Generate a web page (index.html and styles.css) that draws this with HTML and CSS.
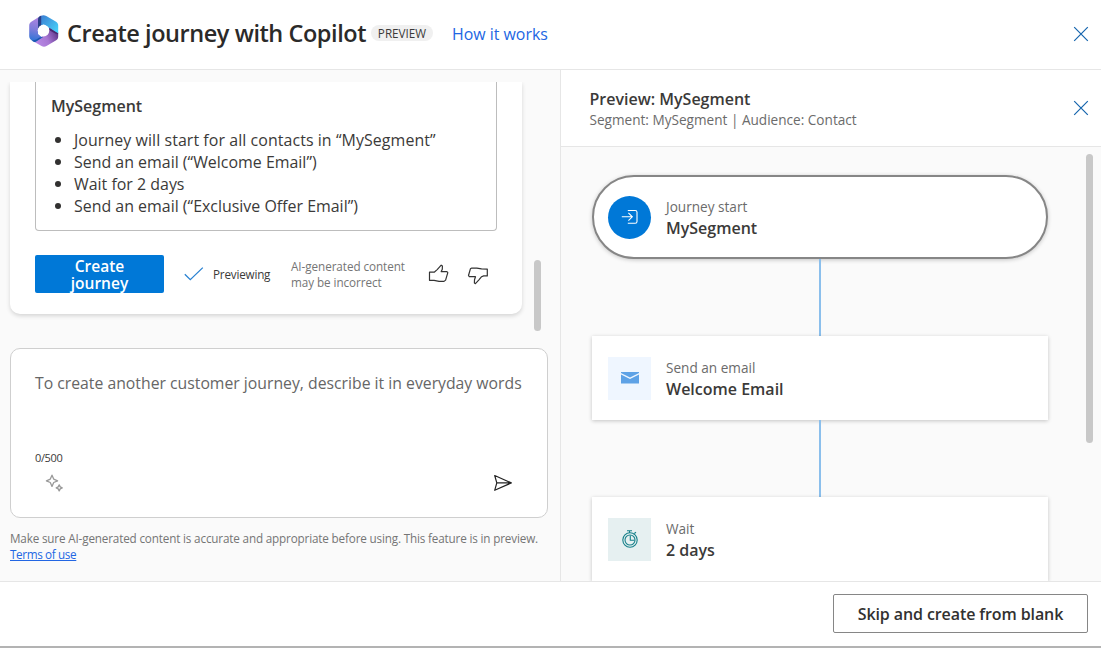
FILE: index.html
```html
<!DOCTYPE html>
<html lang="en">
<head>
<meta charset="utf-8">
<title>Create journey with Copilot</title>
<link rel="stylesheet" href="styles.css">
</head>
<body>
<div class="dialog">
  <header class="topbar">
    <svg class="logo" width="30" height="32" viewBox="0 0 30 32">
      <defs>
        <linearGradient id="lgA" x1=".2" y1="0" x2=".1" y2="1"><stop offset="0" stop-color="#b184e0"/><stop offset=".5" stop-color="#7c7cda"/><stop offset="1" stop-color="#2173d6"/></linearGradient>
        <linearGradient id="lgB" x1="0" y1="0" x2="1" y2=".8"><stop offset="0" stop-color="#3a76cf"/><stop offset="1" stop-color="#48d0f8"/></linearGradient>
        <linearGradient id="lgC" x1="0" y1=".7" x2="1" y2=".3"><stop offset="0" stop-color="#b98ae6"/><stop offset=".5" stop-color="#a877d4"/><stop offset="1" stop-color="#5c3487"/></linearGradient>
      </defs>
      <path fill="url(#lgC)" d="M29.200 17.500v3.900c0 1.900-.8 3.100-2.400 4.100l-9.300 5.600c-1.600 1-3.400 1-5 0l-7-4.200 8.500-6.200 6.500-7.700z"/>
      <path fill="url(#lgB)" d="M9.500 2.500C11 .6 14.500-.8 17.300.9l9.400 5.500c1.600 1 2.500 2.300 2.500 4.100v8L20 13l-5-3.500-4 1z"/>
      <path fill="url(#lgA)" d="M12.200.6C10.200 1.200 9 2.600 9 4.500V19l4.200 3.500-7.200 4.700-3.300-1.900C1.100 24.200.2 22.800.2 21V10.600c0-1.800.9-3.100 2.500-4.100z"/>
      <path fill="#2b3f88" d="M12.200.8v10.400L9 14V4.500c0-2 1.200-3.100 3.200-3.700z"/>
      <path fill="#4a2a72" d="M20.300 12.800l8.900 5.700c-.3 1-1.400 1-2.500.3l-6.400-3.500z"/>
      <path fill="#1b57b0" d="M2.500 25.200c3 .6 5.500-.9 8-2.600l4-.8-7.500 4.800c-1.700 1-3.200-.3-4.500-1.400z"/>
      <circle cx="14.500" cy="15.600" r="5.800" fill="#fff"/>
    </svg>
    <h1 class="title">Create journey with Copilot</h1>
    <span class="badge">PREVIEW</span>
    <a class="how">How it works</a>
    <svg class="close" width="16" height="16" viewBox="0 0 16 16"><path d="M1.200 1.200l13.600 13.600M14.800 1.200L1.200 14.800"/></svg>
  </header>

  <main class="content">
    <section class="chat">
      <div class="chat-scroll">
        <div class="reply">
          <div class="summary">
            <h2 class="summary-title">MySegment</h2>
            <ul class="steps">
              <li class="lead">Journey will start for all contacts in “MySegment”</li>
              <li>Send an email (“Welcome Email”)</li>
              <li>Wait for 2 days</li>
              <li>Send an email (“Exclusive Offer Email”)</li>
            </ul>
          </div>
          <div class="actions">
            <button class="create">Create<br>journey</button>
            <svg class="check" width="20" height="16" viewBox="0 0 20 16"><path d="M.8 8.200l5.500 5.500L18.800 1.600"/></svg>
            <span class="previewing">Previewing</span>
            <p class="disclaimer">AI-generated content<br>may be incorrect</p>
            <svg class="thumb up" width="22" height="20" viewBox="0 0 22 20"><path d="M1.500 8.200h4.700l3-2.600 4-4.400 1.200.9-.1 3.100-1.100 2.400h5.700l.9 1-2.200 7.500-1.600 1.300-4.900-.1-5-1H1.500z"/></svg>
            <svg class="thumb" width="22" height="20" viewBox="0 0 22 20"><path d="M20.300 3.100v6.800h-3.600l-2.100.8-2.900 3.400-3.300 3.600-1-.6.100-3.400 1-3H2.300l-.8-1.200 1.900-6.700 1.400-.8 5 .1 4.700.8z"/></svg>
          </div>
        </div>
        <div class="chat-bar"></div>
      </div>
      <div class="composer">
        <p class="placeholder">To create another customer journey, describe it in everyday words</p>
        <p class="count">0/500</p>
        <div class="tools">
          <svg width="18" height="18" viewBox="0 0 18 18" class="sparkle"><path d="M7 1.200l1.700 3.900 3.900 1.700-3.900 1.700L7 12.400 5.300 8.500 1.400 6.800l3.900-1.700zM14.200 10.900l1 2 2 1-2 1-1 2-1-2-2-1 2-1z"/></svg>
          <svg width="20" height="18" viewBox="0 0 20 18" class="send"><path d="M1.700 1.500L18.300 8.900 1.700 16.300l2.100-7.400zM3.800 8.900H18"/></svg>
        </div>
      </div>
      <p class="note">Make sure AI-generated content is accurate and appropriate before using. This feature is in preview.</p>
      <a class="terms">Terms of use</a>
    </section>

    <section class="preview">
      <div class="preview-head">
        <div class="heading">
          <h2 class="preview-title">Preview: MySegment</h2>
          <p class="preview-sub">Segment: MySegment | Audience: Contact</p>
        </div>
        <svg class="close" width="16" height="16" viewBox="0 0 16 16"><path d="M1.200 1.200l13.600 13.600M14.800 1.200L1.200 14.800"/></svg>
      </div>
      <div class="canvas">
        <div class="flow">
          <div class="node start">
            <span class="icon round"><svg width="18" height="16" viewBox="0 0 18 16"><path d="M.8 7.800h10.400M7.400 3.900l3.900 3.900-3.900 3.900M6.800 1.500h7.400c1.200 0 1.800.6 1.800 1.800v9.200c0 1.200-.6 1.800-1.800 1.800H6.800"/></svg></span>
            <div class="label"><p class="kind">Journey start</p><p class="name">MySegment</p></div>
          </div>
          <div class="link"></div>
          <div class="node">
            <span class="icon mail"><svg width="18" height="12" viewBox="0 0 18 12"><path d="M0 0h18v1L9 5.600 0 1zM0 2.400l9 4.500 9-4.500V11.500H0z"/></svg></span>
            <div class="label"><p class="kind">Send an email</p><p class="name">Welcome Email</p></div>
          </div>
          <div class="link"></div>
          <div class="node">
            <span class="icon wait"><svg width="18" height="20" viewBox="0 0 18 20"><circle cx="9" cy="11" r="7.200"/><circle cx="9" cy="11" r="5"/><path d="M9.300 6.500v4.700h4.200M6 1.700h5M8.500 2v2M13.300 4.500l1.700-1.300"/></svg></span>
            <div class="label"><p class="kind">Wait</p><p class="name">2 days</p></div>
          </div>
        </div>
        <div class="canvas-bar"></div>
      </div>
    </section>
  </main>

  <footer class="footer"><button class="skip">Skip and create from blank</button></footer>
</div>
</body>
</html>
```
FILE: styles.css
```css
* { box-sizing: border-box; margin: 0; padding: 0; }
body {
  width: 1101px; height: 648px; overflow: hidden; background: #fff;
  font-family: "Open Sans", "Noto Sans", sans-serif; color: #3b3a39; white-space: nowrap;
}
svg { display: block; flex: none; fill: none; overflow: visible; }
button { font-family: inherit; display: flex; align-items: center; justify-content: center; }
.dialog { width: 1101px; height: 648px; display: flex; flex-direction: column; border-bottom: 2px solid #b3b3b3; }

.topbar { height: 70px; flex: none; display: flex; align-items: center; padding: 0 13px 2px 29px; border-bottom: 1px solid #e6e6e6; }
.logo { margin-top: -5px; }
.title { width: 299px; margin: -1px 0 0 8px; font-size: 23.500px; font-weight: 550; line-height: 32px; letter-spacing: -.44px; color: #2b2a29; }
.badge { margin: -1px 0 0 5px; width: 62px; height: 16px; border-radius: 8px; background: #f0f0f0; display: flex; align-items: center; justify-content: center; font-size: 11.700px; }
.how { margin-left: 19px; font-size: 15.900px; color: #2266e3; }
.close { margin: 0 -.5px 0 auto; stroke: #1464ad; stroke-width: 1.200; }

.content { flex: 1; min-height: 0; display: flex; }
.chat { width: 561px; flex: none; background: #fafafa; border-right: 1px solid #e6e6e6; padding: 12px 12px 0 10px; }
.chat-scroll { height: 249px; display: flex; overflow: hidden; margin: 0 -10px 17px; padding-left: 10px; }
.reply { width: 512px; height: 232px; background: #fff; border-radius: 0 0 10px 10px; padding: 0 25px; box-shadow: 0 2px 4px rgba(0,0,0,.15); }
.summary { height: 149px; border: 1px solid #bdbdbd; border-top: 0; border-radius: 0 0 4px 4px; padding: 12px 15px 0; }
.summary-title { font-size: 16px; font-weight: 550; line-height: 24px; margin-bottom: 11px; }
.steps { list-style: none; font-size: 15.950px; line-height: 22px; }
.steps li { display: flex; align-items: center; }
.steps .lead { letter-spacing: .07px; }
.steps li::before { content: ""; width: 6px; height: 6px; border-radius: 50%; background: #323130; margin: 0 13px 0 4px; }
.actions { display: flex; align-items: center; height: 38px; margin-top: 24px; }
.create { width: 129px; height: 38px; background: #0078d7; color: #fff; border: 0; border-radius: 2px; font-size: 15.500px; font-weight: 600; line-height: 17px; padding-top: 1px; flex: none; }
.check { margin-left: 20px; stroke: #2a82d2; stroke-width: 1.300; }
.previewing { width: 58px; margin-left: 9px; font-size: 11.700px; letter-spacing: -.2px; }
.disclaimer { width: 115px; margin: 0 0 0 20px; font-size: 11.700px; letter-spacing: -.06px; line-height: 16px; color: #757575; }
.thumb { margin: 3px 0 0 17px; stroke: #333; stroke-width: 1.200; stroke-linejoin: round; }
.up { margin: 0 0 0 22px; }
.chat-bar { width: 7px; height: 71px; border-radius: 4px; background: #c8c8c8; margin: 178px 0 0 12px; }

.composer { width: 538px; height: 170px; background: #fff; border: 1px solid #cfcfcf; border-radius: 10px; padding: 23px 24px; }
.placeholder { font-size: 15.770px; line-height: 22px; color: #666; }
.count { margin-top: 56px; font-size: 11px; letter-spacing: -.35px; line-height: 16px; }
.tools { display: flex; justify-content: space-between; align-items: center; padding: 8px 10px 0 10px; }
.sparkle { margin-top: -1px; stroke: #999; stroke-width: 1.300; stroke-linejoin: round; }
.send { stroke: #222; stroke-width: 1.200; stroke-linejoin: round; }
.note { margin-top: 12px; font-size: 11.700px; letter-spacing: -.16px; line-height: 16px; color: #757575; }
.terms { display: block; width: max-content; font-size: 11.700px; letter-spacing: -.35px; line-height: 16px; color: #2266e3; text-decoration: underline; }

.preview { flex: 1; display: flex; flex-direction: column; background: #fafafa; min-width: 0; }
.preview-head { height: 77px; flex: none; background: #fff; border-bottom: 1px solid #e6e6e6; display: flex; align-items: center; padding: 0 13px 0 29px; }
.heading { margin: 2px 0 0 -.5px; }
.preview-title { font-size: 16px; font-weight: 550; line-height: 22px; }
.preview-sub { font-size: 13.600px; line-height: 20px; color: #6b6b6b; }
.canvas { flex: 1; min-height: 0; display: flex; align-items: flex-start; overflow: hidden; }
.flow { padding: 28px 0 0 31px; width: 488px; }
.node { width: 456px; height: 84px; background: #fff; box-shadow: 0 1px 4px rgba(0,0,0,.22); display: flex; align-items: center; padding-left: 16px; }
.start { border: 2px solid #868686; border-radius: 42px; padding-left: 14px; }
.icon { width: 43px; height: 43px; flex: none; display: flex; align-items: center; justify-content: center; }
.round { border-radius: 50%; background: #0078d7; stroke: #fff; stroke-width: 1.100; }
.mail { background: #eff6ff; }
.mail svg { fill: #5ea2e6; }
.wait { background: #e6f0f1; stroke: #16808a; stroke-width: 1.100; }
.label { margin: 2px 0 0 15px; }
.kind { font-size: 13.600px; line-height: 20px; color: #6b6b6b; }
.name { font-size: 16px; font-weight: 550; line-height: 22px; }
.link { width: 2.500px; height: 77px; margin-left: 226.500px; background: #8bbfec; }
.canvas-bar { width: 7px; height: 289px; border-radius: 4px; background: #c8c8c8; margin: 7px 0 0 37px; }

.footer { height: 65px; flex: none; border-top: 1px solid #e6e6e6; display: flex; justify-content: flex-end; padding: 12px 13px 0; }
.skip { width: 255px; height: 39px; border: 1px solid #868686; border-radius: 2px; background: #fff; font-size: 16px; font-weight: 550; letter-spacing: -.1px; color: #323130; }
```
